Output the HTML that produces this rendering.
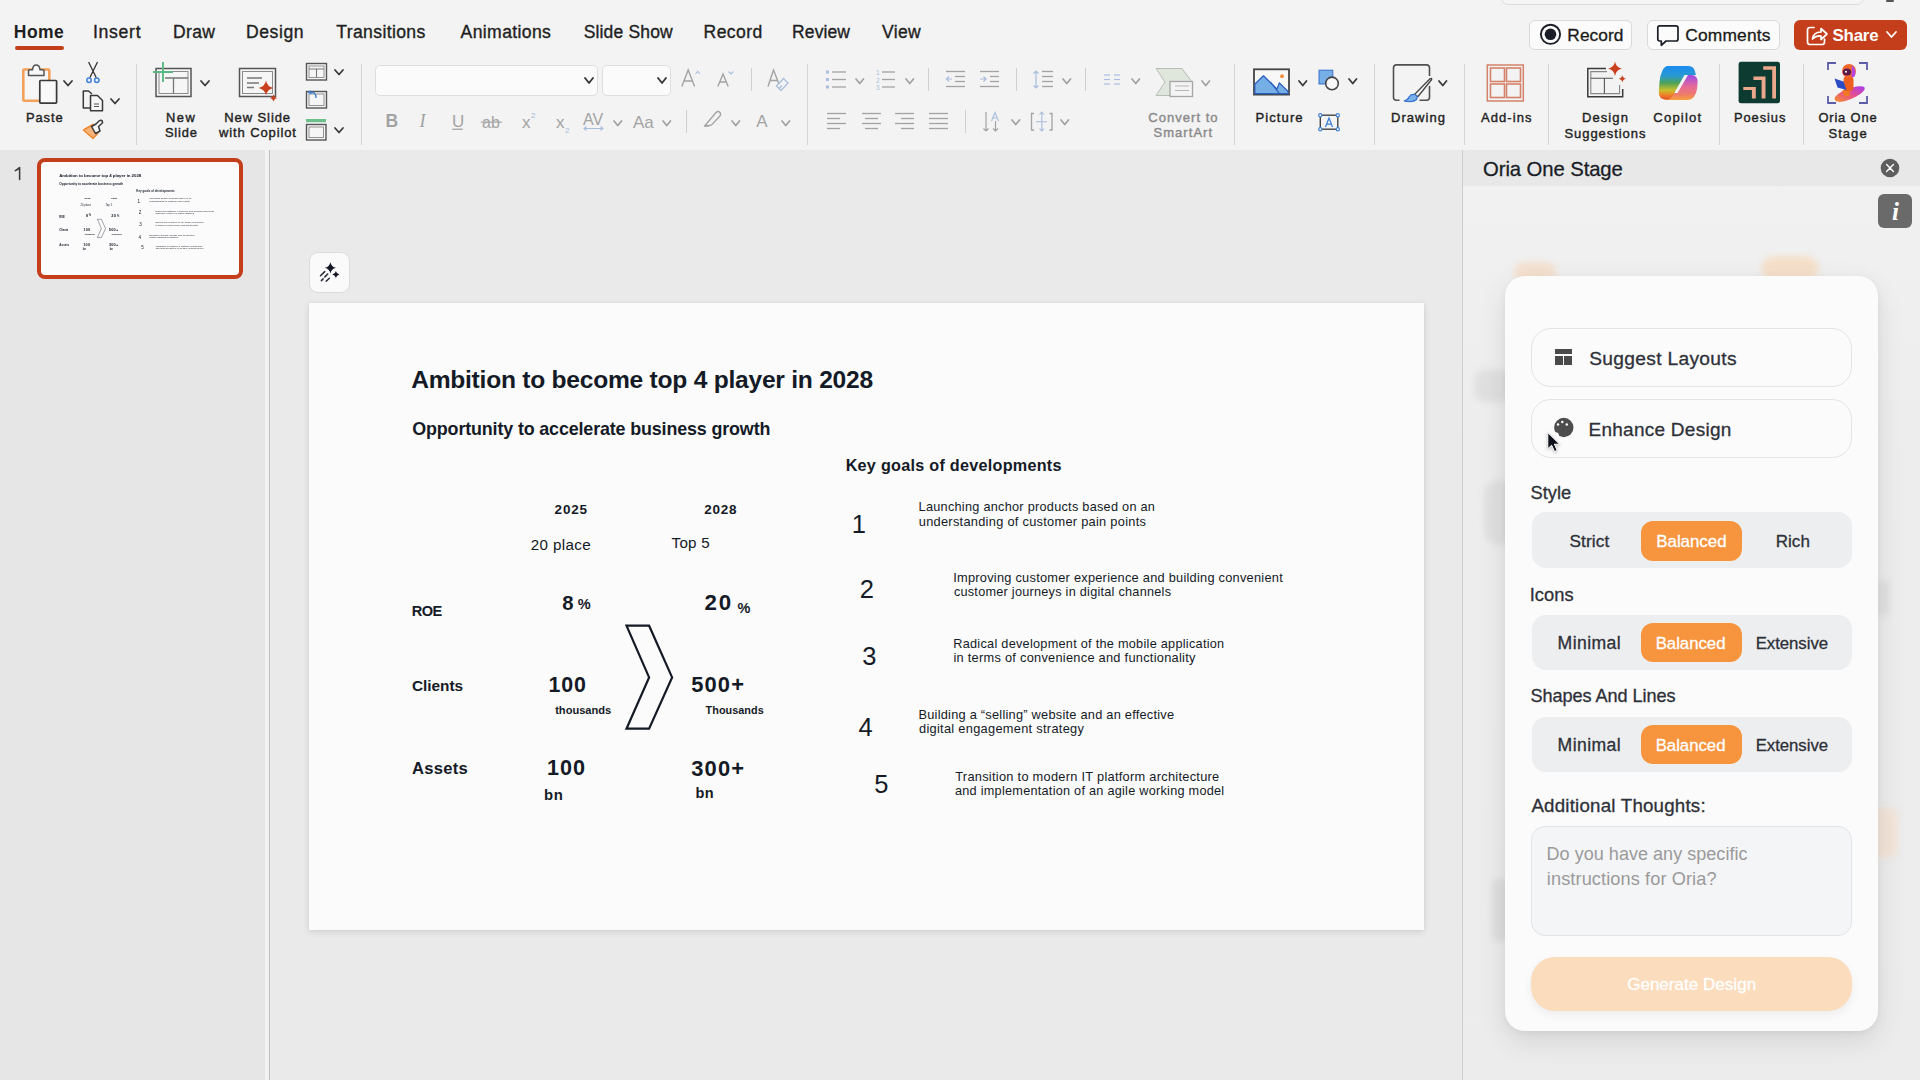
<!DOCTYPE html>
<html><head><meta charset="utf-8"><style>*{margin:0;padding:0;box-sizing:border-box}
html,body{width:1920px;height:1080px;overflow:hidden}
body{position:relative;background:#f3f3f3;font-family:"Liberation Sans",sans-serif}
.a{position:absolute;white-space:nowrap}
svg.a{overflow:visible}
</style></head><body><div class="a" style="left:0px;top:0px;width:1920px;height:149px;background:#f3f3f3"></div><div class="a" style="left:0px;top:149.5px;width:1920px;height:1.5px;background:#d4d4d4"></div><div class="a" style="left:0px;top:150px;width:265px;height:930px;background:#e6e6e6"></div><div class="a" style="left:265px;top:150px;width:4px;height:930px;background:#f2f2f2"></div><div class="a" style="left:269px;top:150px;width:1.2px;height:930px;background:#c2c2c2"></div><div class="a" style="left:270px;top:150px;width:1192px;height:930px;background:#eaeaea"></div><div class="a" style="left:1462px;top:150px;width:1px;height:930px;background:#cdcdcd"></div><div class="a" style="left:1463px;top:150px;width:457px;height:930px;background:#eeeeee"></div><div class="a" style="left:1463px;top:150px;width:457px;height:36px;background:#e8e8e8"></div><div class="a" style="left:1463px;top:186px;width:457px;height:894px;background:linear-gradient(#f1f1f1,#ededed 30%,#ececec)"></div><div class="a" style="left:1474px;top:370px;width:38px;height:32px;background:#e0e0e0;border-radius:10px;filter:blur(3px)"></div><div class="a" style="left:1484px;top:480px;width:31px;height:65px;background:#e0e0e0;border-radius:16px;filter:blur(3px)"></div><div class="a" style="left:1514px;top:262px;width:42px;height:20px;background:#f4e0cf;border-radius:10px;filter:blur(3px)"></div><div class="a" style="left:1762px;top:256px;width:56px;height:26px;background:#f5dfca;border-radius:12px;filter:blur(3px)"></div><div class="a" style="left:1876px;top:580px;width:14px;height:36px;background:#e0e0e0;border-radius:7px;filter:blur(3px)"></div><div class="a" style="left:1874px;top:808px;width:24px;height:50px;background:#f3e4d8;border-radius:8px;filter:blur(3px)"></div><div class="a" style="left:1492px;top:878px;width:16px;height:64px;background:#dedede;border-radius:8px;filter:blur(3px)"></div><div class="a" style="left:1483.09px;top:159px;font-size:20.3px;line-height:20.3px;color:#1a1d26;letter-spacing:-0.089px;-webkit-text-stroke:0.3px #1a1d26">Oria One Stage</div><svg class="a" style="left:1880px;top:158px;" width="20" height="20" viewBox="0 0 20 20"><circle cx="10" cy="10" r="9.3" fill="#5e5e5e"/><path d="M6.6,6.6 L13.4,13.4 M13.4,6.6 L6.6,13.4" stroke="#fff" stroke-width="1.4" stroke-linecap="round"/></svg><div class="a" style="left:1878px;top:194px;width:34px;height:34px;background:#6a6a6a;border-radius:6px"></div><div class="a" style="left:1891.88px;top:199px;font-size:25.0px;line-height:25.0px;color:#ffffff;font-family:'Liberation Serif',serif;font-style:italic;font-weight:bold">i</div><svg class="a" style="left:0px;top:0px;" width="1920" height="1080" viewBox="0 0 1920 1080"><path d="M15.3,170.6 Q17.8,169.4 19.6,167.6 V179.5" fill="none" stroke="#3a3a3a" stroke-width="1.55" stroke-linecap="round" stroke-linejoin="round"/></svg><div class="a" style="left:37px;top:158px;width:205.5px;height:120.5px;border:4.4px solid #c43e1c;border-radius:8px;background:#fbfbfb"></div><div class="a" style="left:40.5px;top:162.4px;width:1115px;height:627px;transform:scale(0.1776);transform-origin:0 0"><div class="a" style="left:102.13px;top:65px;font-size:24.6px;line-height:24.6px;color:#141a26;font-weight:bold;letter-spacing:-0.249px">Ambition to become top 4 player in 2028</div><div class="a" style="left:103.28px;top:118px;font-size:17.9px;line-height:17.9px;color:#141a26;font-weight:bold;letter-spacing:-0.143px">Opportunity to accelerate business growth</div><div class="a" style="left:536.65px;top:154px;font-size:16.2px;line-height:16.2px;color:#141a26;font-weight:bold;letter-spacing:0.262px">Key goals of developments</div><div class="a" style="left:245.53px;top:200px;font-size:13.5px;line-height:13.5px;color:#141a26;font-weight:bold;letter-spacing:0.857px">2025</div><div class="a" style="left:395.23px;top:200px;font-size:13.5px;line-height:13.5px;color:#141a26;font-weight:bold;letter-spacing:0.780px">2028</div><div class="a" style="left:221.84px;top:234px;font-size:15.2px;line-height:15.2px;color:#141a26;letter-spacing:0.341px">20 place</div><div class="a" style="left:362.60px;top:232px;font-size:15.2px;line-height:15.2px;color:#141a26;letter-spacing:0.212px">Top 5</div><div class="a" style="left:102.65px;top:301px;font-size:14.6px;line-height:14.6px;color:#141a26;font-weight:bold;letter-spacing:-0.475px">ROE</div><div class="a" style="left:253.19px;top:290px;font-size:20.3px;line-height:20.3px;color:#141a26;font-weight:bold">8</div><div class="a" style="left:268.64px;top:294px;font-size:14.5px;line-height:14.5px;color:#141a26;font-weight:bold">%</div><div class="a" style="left:395.62px;top:289px;font-size:22.3px;line-height:22.3px;color:#141a26;font-weight:bold;letter-spacing:1.819px">20</div><div class="a" style="left:428.44px;top:298px;font-size:14.5px;line-height:14.5px;color:#141a26;font-weight:bold">%</div><div class="a" style="left:102.88px;top:375px;font-size:15.4px;line-height:15.4px;color:#141a26;font-weight:bold;letter-spacing:-0.021px">Clients</div><div class="a" style="left:239.42px;top:372px;font-size:21.4px;line-height:21.4px;color:#141a26;font-weight:bold;letter-spacing:0.904px">100</div><div class="a" style="left:246.19px;top:402px;font-size:11.1px;line-height:11.1px;color:#141a26;font-weight:bold;letter-spacing:-0.007px">thousands</div><div class="a" style="left:382.14px;top:371px;font-size:21.9px;line-height:21.9px;color:#141a26;font-weight:bold;letter-spacing:1.183px">500+</div><div class="a" style="left:396.59px;top:402px;font-size:10.8px;line-height:10.8px;color:#141a26;font-weight:bold;letter-spacing:0.065px">Thousands</div><div class="a" style="left:103.08px;top:458px;font-size:16.6px;line-height:16.6px;color:#141a26;font-weight:bold;letter-spacing:0.266px">Assets</div><div class="a" style="left:238.00px;top:454px;font-size:21.6px;line-height:21.6px;color:#141a26;font-weight:bold;letter-spacing:1.048px">100</div><div class="a" style="left:235.03px;top:485px;font-size:14.9px;line-height:14.9px;color:#141a26;font-weight:bold;letter-spacing:0.684px">bn</div><div class="a" style="left:382.25px;top:455px;font-size:21.9px;line-height:21.9px;color:#141a26;font-weight:bold;letter-spacing:1.146px">300+</div><div class="a" style="left:386.46px;top:483px;font-size:14.5px;line-height:14.5px;color:#141a26;font-weight:bold;letter-spacing:0.323px">bn</div><svg class="a" style="left:291px;top:307px;" width="90" height="130" viewBox="0 0 90 130"><polygon points="26.5,15.7 49.1,15.7 72.1,67.4 49.1,118.7 26.5,118.7 49.1,67.4" fill="none" stroke="#141a26" stroke-width="2.2" stroke-linejoin="miter"/></svg><div class="a" style="left:542.69px;top:209px;font-size:25.5px;line-height:25.5px;color:#141a26">1</div><div class="a" style="left:550.73px;top:274px;font-size:25.5px;line-height:25.5px;color:#141a26">2</div><div class="a" style="left:553.18px;top:341px;font-size:25.5px;line-height:25.5px;color:#141a26">3</div><div class="a" style="left:549.49px;top:412px;font-size:25.5px;line-height:25.5px;color:#141a26">4</div><div class="a" style="left:565.18px;top:469px;font-size:25.5px;line-height:25.5px;color:#141a26">5</div><div class="a" style="left:609.58px;top:198px;font-size:12.7px;line-height:12.7px;color:#141a26;letter-spacing:0.275px">Launching anchor products based on an</div><div class="a" style="left:609.77px;top:213px;font-size:12.8px;line-height:12.8px;color:#141a26;letter-spacing:0.282px">understanding of customer pain points</div><div class="a" style="left:644.25px;top:269px;font-size:12.8px;line-height:12.8px;color:#141a26;letter-spacing:0.248px">Improving customer experience and building convenient</div><div class="a" style="left:644.89px;top:283px;font-size:12.7px;line-height:12.7px;color:#141a26;letter-spacing:0.252px">customer journeys in digital channels</div><div class="a" style="left:644.28px;top:335px;font-size:12.7px;line-height:12.7px;color:#141a26;letter-spacing:0.274px">Radical development of the mobile application</div><div class="a" style="left:644.47px;top:349px;font-size:12.8px;line-height:12.8px;color:#141a26;letter-spacing:0.268px">in terms of convenience and functionality</div><div class="a" style="left:609.48px;top:406px;font-size:12.8px;line-height:12.8px;color:#141a26;letter-spacing:0.238px">Building a “selling” website and an effective</div><div class="a" style="left:609.99px;top:420px;font-size:12.8px;line-height:12.8px;color:#141a26;letter-spacing:0.295px">digital engagement strategy</div><div class="a" style="left:646.24px;top:468px;font-size:12.8px;line-height:12.8px;color:#141a26;letter-spacing:0.277px">Transition to modern IT platform architecture</div><div class="a" style="left:645.99px;top:482px;font-size:12.7px;line-height:12.7px;color:#141a26;letter-spacing:0.257px">and implementation of an agile working model</div></div><div class="a" style="left:309px;top:252px;width:41px;height:41px;background:#fafafa;border:1px solid #dcdcdc;border-radius:9px"></div><svg class="a" style="left:0px;top:0px;" width="1920" height="1080" viewBox="0 0 1920 1080"><path d="M330.40,262.20 Q331.35,266.85 336.00,267.80 Q331.35,268.75 330.40,273.40 Q329.45,268.75 324.80,267.80 Q329.45,266.85 330.40,262.20 Z M335.90,271.10 Q336.50,274.00 339.40,274.60 Q336.50,275.20 335.90,278.10 Q335.30,275.20 332.40,274.60 Q335.30,274.00 335.90,271.10 Z" fill="#141824"/><path d="M320.5,275.7 L324.7,271.6 M324.8,276.9 L327.7,274 M321.4,280.6 L323.1,278.9 M326.2,281.3 L329.3,278.2" stroke="#2a2d36" stroke-width="1.5" stroke-linecap="round"/></svg><div class="a" style="left:309px;top:303px;width:1115px;height:627px;background:#fbfbfb;box-shadow:0 2px 7px rgba(0,0,0,.11),0 0 2px rgba(0,0,0,.06)"></div><div class="a" style="left:309px;top:303px;width:1115px;height:627px"><div class="a" style="left:102.13px;top:65px;font-size:24.6px;line-height:24.6px;color:#141a26;font-weight:bold;letter-spacing:-0.249px">Ambition to become top 4 player in 2028</div><div class="a" style="left:103.28px;top:118px;font-size:17.9px;line-height:17.9px;color:#141a26;font-weight:bold;letter-spacing:-0.143px">Opportunity to accelerate business growth</div><div class="a" style="left:536.65px;top:154px;font-size:16.2px;line-height:16.2px;color:#141a26;font-weight:bold;letter-spacing:0.262px">Key goals of developments</div><div class="a" style="left:245.53px;top:200px;font-size:13.5px;line-height:13.5px;color:#141a26;font-weight:bold;letter-spacing:0.857px">2025</div><div class="a" style="left:395.23px;top:200px;font-size:13.5px;line-height:13.5px;color:#141a26;font-weight:bold;letter-spacing:0.780px">2028</div><div class="a" style="left:221.84px;top:234px;font-size:15.2px;line-height:15.2px;color:#141a26;letter-spacing:0.341px">20 place</div><div class="a" style="left:362.60px;top:232px;font-size:15.2px;line-height:15.2px;color:#141a26;letter-spacing:0.212px">Top 5</div><div class="a" style="left:102.65px;top:301px;font-size:14.6px;line-height:14.6px;color:#141a26;font-weight:bold;letter-spacing:-0.475px">ROE</div><div class="a" style="left:253.19px;top:290px;font-size:20.3px;line-height:20.3px;color:#141a26;font-weight:bold">8</div><div class="a" style="left:268.64px;top:294px;font-size:14.5px;line-height:14.5px;color:#141a26;font-weight:bold">%</div><div class="a" style="left:395.62px;top:289px;font-size:22.3px;line-height:22.3px;color:#141a26;font-weight:bold;letter-spacing:1.819px">20</div><div class="a" style="left:428.44px;top:298px;font-size:14.5px;line-height:14.5px;color:#141a26;font-weight:bold">%</div><div class="a" style="left:102.88px;top:375px;font-size:15.4px;line-height:15.4px;color:#141a26;font-weight:bold;letter-spacing:-0.021px">Clients</div><div class="a" style="left:239.42px;top:372px;font-size:21.4px;line-height:21.4px;color:#141a26;font-weight:bold;letter-spacing:0.904px">100</div><div class="a" style="left:246.19px;top:402px;font-size:11.1px;line-height:11.1px;color:#141a26;font-weight:bold;letter-spacing:-0.007px">thousands</div><div class="a" style="left:382.14px;top:371px;font-size:21.9px;line-height:21.9px;color:#141a26;font-weight:bold;letter-spacing:1.183px">500+</div><div class="a" style="left:396.59px;top:402px;font-size:10.8px;line-height:10.8px;color:#141a26;font-weight:bold;letter-spacing:0.065px">Thousands</div><div class="a" style="left:103.08px;top:458px;font-size:16.6px;line-height:16.6px;color:#141a26;font-weight:bold;letter-spacing:0.266px">Assets</div><div class="a" style="left:238.00px;top:454px;font-size:21.6px;line-height:21.6px;color:#141a26;font-weight:bold;letter-spacing:1.048px">100</div><div class="a" style="left:235.03px;top:485px;font-size:14.9px;line-height:14.9px;color:#141a26;font-weight:bold;letter-spacing:0.684px">bn</div><div class="a" style="left:382.25px;top:455px;font-size:21.9px;line-height:21.9px;color:#141a26;font-weight:bold;letter-spacing:1.146px">300+</div><div class="a" style="left:386.46px;top:483px;font-size:14.5px;line-height:14.5px;color:#141a26;font-weight:bold;letter-spacing:0.323px">bn</div><svg class="a" style="left:291px;top:307px;" width="90" height="130" viewBox="0 0 90 130"><polygon points="26.5,15.7 49.1,15.7 72.1,67.4 49.1,118.7 26.5,118.7 49.1,67.4" fill="none" stroke="#141a26" stroke-width="2.2" stroke-linejoin="miter"/></svg><div class="a" style="left:542.69px;top:209px;font-size:25.5px;line-height:25.5px;color:#141a26">1</div><div class="a" style="left:550.73px;top:274px;font-size:25.5px;line-height:25.5px;color:#141a26">2</div><div class="a" style="left:553.18px;top:341px;font-size:25.5px;line-height:25.5px;color:#141a26">3</div><div class="a" style="left:549.49px;top:412px;font-size:25.5px;line-height:25.5px;color:#141a26">4</div><div class="a" style="left:565.18px;top:469px;font-size:25.5px;line-height:25.5px;color:#141a26">5</div><div class="a" style="left:609.58px;top:198px;font-size:12.7px;line-height:12.7px;color:#141a26;letter-spacing:0.275px">Launching anchor products based on an</div><div class="a" style="left:609.77px;top:213px;font-size:12.8px;line-height:12.8px;color:#141a26;letter-spacing:0.282px">understanding of customer pain points</div><div class="a" style="left:644.25px;top:269px;font-size:12.8px;line-height:12.8px;color:#141a26;letter-spacing:0.248px">Improving customer experience and building convenient</div><div class="a" style="left:644.89px;top:283px;font-size:12.7px;line-height:12.7px;color:#141a26;letter-spacing:0.252px">customer journeys in digital channels</div><div class="a" style="left:644.28px;top:335px;font-size:12.7px;line-height:12.7px;color:#141a26;letter-spacing:0.274px">Radical development of the mobile application</div><div class="a" style="left:644.47px;top:349px;font-size:12.8px;line-height:12.8px;color:#141a26;letter-spacing:0.268px">in terms of convenience and functionality</div><div class="a" style="left:609.48px;top:406px;font-size:12.8px;line-height:12.8px;color:#141a26;letter-spacing:0.238px">Building a “selling” website and an effective</div><div class="a" style="left:609.99px;top:420px;font-size:12.8px;line-height:12.8px;color:#141a26;letter-spacing:0.295px">digital engagement strategy</div><div class="a" style="left:646.24px;top:468px;font-size:12.8px;line-height:12.8px;color:#141a26;letter-spacing:0.277px">Transition to modern IT platform architecture</div><div class="a" style="left:645.99px;top:482px;font-size:12.7px;line-height:12.7px;color:#141a26;letter-spacing:0.257px">and implementation of an agile working model</div></div><div class="a" style="left:13.86px;top:24px;font-size:17.5px;line-height:17.5px;color:#1f1f1f;font-weight:bold;letter-spacing:0.396px">Home</div><div class="a" style="left:92.91px;top:24px;font-size:17.7px;line-height:17.7px;color:#1f1f1f;letter-spacing:0.686px;-webkit-text-stroke:0.35px #1f1f1f">Insert</div><div class="a" style="left:173.10px;top:24px;font-size:17.5px;line-height:17.5px;color:#1f1f1f;letter-spacing:0.346px;-webkit-text-stroke:0.35px #1f1f1f">Draw</div><div class="a" style="left:245.89px;top:24px;font-size:17.6px;line-height:17.6px;color:#1f1f1f;letter-spacing:0.603px;-webkit-text-stroke:0.35px #1f1f1f">Design</div><div class="a" style="left:336.25px;top:24px;font-size:17.6px;line-height:17.6px;color:#1f1f1f;letter-spacing:0.362px;-webkit-text-stroke:0.35px #1f1f1f">Transitions</div><div class="a" style="left:460.60px;top:24px;font-size:17.6px;line-height:17.6px;color:#1f1f1f;letter-spacing:0.365px;-webkit-text-stroke:0.35px #1f1f1f">Animations</div><div class="a" style="left:583.71px;top:24px;font-size:17.5px;line-height:17.5px;color:#1f1f1f;letter-spacing:0.156px;-webkit-text-stroke:0.35px #1f1f1f">Slide Show</div><div class="a" style="left:703.49px;top:24px;font-size:17.6px;line-height:17.6px;color:#1f1f1f;letter-spacing:0.438px;-webkit-text-stroke:0.35px #1f1f1f">Record</div><div class="a" style="left:792.10px;top:24px;font-size:17.5px;line-height:17.5px;color:#1f1f1f;letter-spacing:0.100px;-webkit-text-stroke:0.35px #1f1f1f">Review</div><div class="a" style="left:882.01px;top:24px;font-size:17.5px;line-height:17.5px;color:#1f1f1f;letter-spacing:0.354px;-webkit-text-stroke:0.35px #1f1f1f">View</div><div class="a" style="left:15px;top:46px;width:49px;height:4px;background:#c43e1c;border-radius:2px"></div><div class="a" style="left:1501px;top:-26px;width:363px;height:30.5px;background:#f5f5f5;border:1px solid #dddddd;border-radius:7px"></div><div class="a" style="left:1886px;top:0px;width:8px;height:1.5px;background:#555;border-radius:1px"></div><div class="a" style="left:1529px;top:20px;width:102.5px;height:29.5px;background:#fbfbfb;border:1px solid #d9d9d9;border-radius:6px"></div><svg class="a" style="left:1539px;top:23px;" width="23" height="23" viewBox="0 0 23 23"><circle cx="11.5" cy="11.3" r="9.6" fill="none" stroke="#1a1d26" stroke-width="1.9"/><circle cx="11.5" cy="11.3" r="5.8" fill="#1a1d26"/></svg><div class="a" style="left:1567.37px;top:27px;font-size:17.3px;line-height:17.3px;color:#1a1a1a;letter-spacing:0.073px;-webkit-text-stroke:0.3px #1a1a1a">Record</div><div class="a" style="left:1646.5px;top:20px;width:133.0px;height:29.5px;background:#fbfbfb;border:1px solid #d9d9d9;border-radius:6px"></div><svg class="a" style="left:1656px;top:24px;" width="24" height="23" viewBox="0 0 24 23"><path d="M3.5,1.8 H20 Q22,1.8 22,3.8 V15 Q22,17 20,17 H10 L5.3,21.3 V17 H3.5 Q1.8,17 1.8,15 V3.8 Q1.8,1.8 3.5,1.8 Z" fill="none" stroke="#1a1d26" stroke-width="1.7" stroke-linejoin="round"/></svg><div class="a" style="left:1685.13px;top:27px;font-size:17.4px;line-height:17.4px;color:#1a1a1a;letter-spacing:0.193px;-webkit-text-stroke:0.3px #1a1a1a">Comments</div><div class="a" style="left:1794px;top:19.5px;width:113px;height:30.5px;background:#c43e1c;border-radius:6px"></div><svg class="a" style="left:1805px;top:23px;" width="24" height="24" viewBox="0 0 24 24"><path d="M9,4.5 H5 Q2.5,4.5 2.5,7 V19 Q2.5,21.5 5,21.5 H17 Q19.5,21.5 19.5,19 V16" fill="none" stroke="#fff" stroke-width="1.7" stroke-linecap="round"/><path d="M7.5,16 Q8.5,9 16,9 V5.5 L22,11 L16,16.5 V13 Q11,12.5 7.5,16 Z" fill="none" stroke="#fff" stroke-width="1.7" stroke-linejoin="round"/></svg><div class="a" style="left:1832.49px;top:28px;font-size:16.9px;line-height:16.9px;color:#ffffff;font-weight:bold;letter-spacing:-0.221px">Share</div><svg class="a" style="left:1886px;top:31px;" width="11" height="7" viewBox="0 0 11 7"><path d="M1,1 L5.5,6 L10,1" fill="none" stroke="#fff" stroke-width="1.7920000000000003" stroke-linecap="round" stroke-linejoin="round"/></svg><div class="a" style="left:136px;top:64px;width:1px;height:81px;background:#d4d4d4"></div><div class="a" style="left:361px;top:64px;width:1px;height:81px;background:#d4d4d4"></div><div class="a" style="left:807px;top:64px;width:1px;height:81px;background:#d4d4d4"></div><div class="a" style="left:1234px;top:64px;width:1px;height:81px;background:#d4d4d4"></div><div class="a" style="left:1374px;top:64px;width:1px;height:81px;background:#d4d4d4"></div><div class="a" style="left:1464px;top:64px;width:1px;height:81px;background:#d4d4d4"></div><div class="a" style="left:1548px;top:64px;width:1px;height:81px;background:#d4d4d4"></div><div class="a" style="left:1719px;top:64px;width:1px;height:81px;background:#d4d4d4"></div><div class="a" style="left:1803px;top:64px;width:1px;height:81px;background:#d4d4d4"></div><div class="a" style="left:751px;top:68px;width:1px;height:23px;background:#d0d0d0"></div><div class="a" style="left:928px;top:68px;width:1px;height:23px;background:#d0d0d0"></div><div class="a" style="left:1016px;top:68px;width:1px;height:23px;background:#d0d0d0"></div><div class="a" style="left:1085px;top:68px;width:1px;height:23px;background:#d0d0d0"></div><div class="a" style="left:686px;top:110px;width:1px;height:23px;background:#d0d0d0"></div><div class="a" style="left:965px;top:110px;width:1px;height:23px;background:#d0d0d0"></div><div class="a" style="left:25.97px;top:112px;font-size:12.9px;line-height:12.9px;color:#1f1f1f;letter-spacing:0.913px;-webkit-text-stroke:0.4px #1f1f1f">Paste</div><div class="a" style="left:165.97px;top:112px;font-size:12.9px;line-height:12.9px;color:#1f1f1f;letter-spacing:1.584px;-webkit-text-stroke:0.4px #1f1f1f">New</div><div class="a" style="left:164.92px;top:127px;font-size:12.9px;line-height:12.9px;color:#1f1f1f;letter-spacing:0.865px;-webkit-text-stroke:0.4px #1f1f1f">Slide</div><div class="a" style="left:224.26px;top:111px;font-size:13.0px;line-height:13.0px;color:#1f1f1f;letter-spacing:0.916px;-webkit-text-stroke:0.4px #1f1f1f">New Slide</div><div class="a" style="left:219.00px;top:126px;font-size:13.0px;line-height:13.0px;color:#1f1f1f;letter-spacing:0.884px;-webkit-text-stroke:0.4px #1f1f1f">with Copilot</div><div class="a" style="left:1148.35px;top:111px;font-size:13.1px;line-height:13.1px;color:#8a8a8a;letter-spacing:0.976px;-webkit-text-stroke:0.4px #8a8a8a">Convert to</div><div class="a" style="left:1153.41px;top:126px;font-size:13.0px;line-height:13.0px;color:#8a8a8a;letter-spacing:1.061px;-webkit-text-stroke:0.4px #8a8a8a">SmartArt</div><div class="a" style="left:1255.45px;top:111px;font-size:13.1px;line-height:13.1px;color:#1f1f1f;letter-spacing:1.066px;-webkit-text-stroke:0.4px #1f1f1f">Picture</div><div class="a" style="left:1390.96px;top:111px;font-size:13.0px;line-height:13.0px;color:#1f1f1f;letter-spacing:1.040px;-webkit-text-stroke:0.4px #1f1f1f">Drawing</div><div class="a" style="left:1481.00px;top:111px;font-size:13.0px;line-height:13.0px;color:#1f1f1f;letter-spacing:1.064px;-webkit-text-stroke:0.4px #1f1f1f">Add-ins</div><div class="a" style="left:1581.96px;top:111px;font-size:13.0px;line-height:13.0px;color:#1f1f1f;letter-spacing:1.091px;-webkit-text-stroke:0.4px #1f1f1f">Design</div><div class="a" style="left:1564.41px;top:127px;font-size:13.0px;line-height:13.0px;color:#1f1f1f;letter-spacing:0.948px;-webkit-text-stroke:0.4px #1f1f1f">Suggestions</div><div class="a" style="left:1653.35px;top:111px;font-size:13.1px;line-height:13.1px;color:#1f1f1f;letter-spacing:1.163px;-webkit-text-stroke:0.4px #1f1f1f">Copilot</div><div class="a" style="left:1733.97px;top:112px;font-size:12.9px;line-height:12.9px;color:#1f1f1f;letter-spacing:0.927px;-webkit-text-stroke:0.4px #1f1f1f">Poesius</div><div class="a" style="left:1818.42px;top:112px;font-size:12.9px;line-height:12.9px;color:#1f1f1f;letter-spacing:0.836px;-webkit-text-stroke:0.4px #1f1f1f">Oria One</div><div class="a" style="left:1828.41px;top:127px;font-size:13.0px;line-height:13.0px;color:#1f1f1f;letter-spacing:1.060px;-webkit-text-stroke:0.4px #1f1f1f">Stage</div><div class="a" style="left:374.5px;top:65px;width:223.5px;height:30.5px;background:#fbfbfb;border:1px solid #dedede;border-radius:5px"></div><svg class="a" style="left:584px;top:77px;" width="10" height="7" viewBox="0 0 10 7"><path d="M1,1 L5.0,6 L9,1" fill="none" stroke="#3a3a3a" stroke-width="1.9040000000000001" stroke-linecap="round" stroke-linejoin="round"/></svg><div class="a" style="left:602px;top:65px;width:69px;height:30.5px;background:#fbfbfb;border:1px solid #dedede;border-radius:5px"></div><svg class="a" style="left:657px;top:77px;" width="10" height="7" viewBox="0 0 10 7"><path d="M1,1 L5.0,6 L9,1" fill="none" stroke="#3a3a3a" stroke-width="1.9040000000000001" stroke-linecap="round" stroke-linejoin="round"/></svg><svg class="a" style="left:0px;top:0px;" width="1920" height="150" viewBox="0 0 1920 150"><rect x="23.3" y="69.5" width="26" height="31.3" rx="1" fill="#f6f6f6" stroke="#f2a05a" stroke-width="2.6"/><path d="M28.5,75.5 V71 Q28.5,69.8 30,69.8 H32.5 Q33,65 36.2,65 Q39.4,65 40,69.8 H42.5 Q44,69.8 44,71 V75.5 Z" fill="#f8f8f8" stroke="#555" stroke-width="1.5" stroke-linejoin="round"/><rect x="39.8" y="80.5" width="16.8" height="22.6" rx="0.8" fill="#f9f9f9" stroke="#3a3a3a" stroke-width="1.7"/><path d="M88.6,62 L96.3,77.8 M97.5,62 L89.8,77.8" stroke="#333" stroke-width="1.3" fill="none"/><circle cx="89" cy="80.2" r="2.2" fill="none" stroke="#3f82d6" stroke-width="1.5"/><circle cx="96.8" cy="80.2" r="2.2" fill="none" stroke="#3f82d6" stroke-width="1.5"/><path d="M90,108 H83.3 V91 H88.5 L92,94" fill="none" stroke="#3a3a3a" stroke-width="1.5" stroke-linejoin="round"/><path d="M90.5,95.5 H97.5 L102.5,100.5 V110.8 H90.5 Z" fill="#f7f7f7" stroke="#3a3a3a" stroke-width="1.5" stroke-linejoin="round"/><path d="M94,104 H99 M94,106.5 H99" stroke="#555" stroke-width="1"/><path d="M83.5,130 L93,124.5 L98,133 L93,138.5 Z" fill="#f7b27a" stroke="#f08a32" stroke-width="1.6" stroke-linejoin="round"/><path d="M91.5,126.5 L96,124 L99,121 Q101,119.5 102.3,121 Q103.2,122.5 101.3,124 L98.5,126.5 L100,131 L95.5,133.5 Z" fill="#f6f6f6" stroke="#3a3a3a" stroke-width="1.5" stroke-linejoin="round"/><rect x="156" y="68.5" width="35" height="28" fill="#f6f6f6" stroke="#555" stroke-width="1.5"/><rect x="159" y="71.5" width="29" height="22" fill="none" stroke="#8a8a8a" stroke-width="1"/><path d="M165,78 H188 M173.5,78 V93.5" stroke="#777" stroke-width="1.3"/><path d="M163,62 V82 M153,72 H173" stroke="#5cb882" stroke-width="1.9"/><rect x="239.5" y="68.5" width="36" height="28" fill="#f6f6f6" stroke="#555" stroke-width="1.5"/><rect x="242.5" y="71.5" width="30" height="22" fill="none" stroke="#8a8a8a" stroke-width="1"/><path d="M247,78 H262 M247,83 H259 M247,87.5 H254" stroke="#777" stroke-width="1.3"/><path d="M266,80.5 Q267.2,86.8 273.5,88 Q267.2,89.2 266,95.5 Q264.8,89.2 258.5,88 Q264.8,86.8 266,80.5 Z" fill="#c8401e"/><path d="M273.5,94.5 Q274.1,97.4 277,98 Q274.1,98.6 273.5,101.5 Q272.9,98.6 270,98 Q272.9,97.4 273.5,94.5 Z" fill="#c8401e"/><rect x="306.5" y="63.5" width="20" height="16.5" fill="#f6f6f6" stroke="#555" stroke-width="1.4"/><rect x="309" y="66" width="15" height="11.5" fill="none" stroke="#888" stroke-width="0.9"/><path d="M309,69 H324 M316.5,69 V77.5" stroke="#777" stroke-width="1.1"/><rect x="306.5" y="91.5" width="20" height="16.5" fill="#f6f6f6" stroke="#555" stroke-width="1.4"/><rect x="309" y="94" width="15" height="11.5" fill="none" stroke="#888" stroke-width="0.9"/><path d="M310,93 Q316,91 316,98" fill="none" stroke="#3f82d6" stroke-width="1.5"/><path d="M307.5,92.5 L310.5,90 L311,94.5 Z" fill="#3f82d6"/><rect x="306" y="119" width="20" height="3.2" fill="#6cc08a"/><rect x="306.5" y="124.5" width="19.5" height="15.5" fill="#f6f6f6" stroke="#555" stroke-width="1.4"/><rect x="309" y="127" width="14.5" height="10.5" fill="none" stroke="#888" stroke-width="0.9"/></svg><svg class="a" style="left:63px;top:80px;" width="10" height="6.5" viewBox="0 0 10 6.5"><path d="M1,1 L5.0,5.5 L9,1" fill="none" stroke="#3a3a3a" stroke-width="1.7920000000000003" stroke-linecap="round" stroke-linejoin="round"/></svg><svg class="a" style="left:110px;top:98px;" width="10" height="6.5" viewBox="0 0 10 6.5"><path d="M1,1 L5.0,5.5 L9,1" fill="none" stroke="#3a3a3a" stroke-width="1.7920000000000003" stroke-linecap="round" stroke-linejoin="round"/></svg><svg class="a" style="left:200px;top:80px;" width="10" height="6.5" viewBox="0 0 10 6.5"><path d="M1,1 L5.0,5.5 L9,1" fill="none" stroke="#3a3a3a" stroke-width="1.7920000000000003" stroke-linecap="round" stroke-linejoin="round"/></svg><svg class="a" style="left:334px;top:69px;" width="10" height="6.5" viewBox="0 0 10 6.5"><path d="M1,1 L5.0,5.5 L9,1" fill="none" stroke="#3a3a3a" stroke-width="1.7920000000000003" stroke-linecap="round" stroke-linejoin="round"/></svg><svg class="a" style="left:334px;top:127px;" width="10" height="6.5" viewBox="0 0 10 6.5"><path d="M1,1 L5.0,5.5 L9,1" fill="none" stroke="#3a3a3a" stroke-width="1.7920000000000003" stroke-linecap="round" stroke-linejoin="round"/></svg><svg class="a" style="left:0px;top:0px;" width="1920" height="150" viewBox="0 0 1920 150"><path d="M681.8,86.5 L688.2,70 L694.6,86.5 M684,81 H692.4" fill="none" stroke="#a3a3a3" stroke-width="1.4"/><path d="M695.5,74 L697.8,71.3 L700,74" fill="none" stroke="#a9bddc" stroke-width="1.1"/><path d="M717.8,86.5 L723,74 L728.2,86.5 M719.6,82 H726.4" fill="none" stroke="#a3a3a3" stroke-width="1.4"/><path d="M728.5,71.5 L731,74 L733.5,71.5" fill="none" stroke="#a9bddc" stroke-width="1.1"/><path d="M768,86.5 L773.5,70 L779,84 M770,80.5 H777" fill="none" stroke="#a3a3a3" stroke-width="1.4"/><path d="M776.5,86 L783.5,78.5 L788,83 L781,90.5 Z M779,88.5 L782,85.5" fill="none" stroke="#a9bddc" stroke-width="1.3"/><text x="385.5" y="127.3" font-family="Liberation Sans" font-weight="bold" font-size="17.5" fill="#a3a3a3">B</text><text x="419.5" y="127.3" font-family="Liberation Serif" font-style="italic" font-size="18" fill="#a3a3a3">I</text><text x="452" y="127" font-family="Liberation Sans" font-size="17" fill="#a3a3a3">U</text><rect x="452.3" y="128.6" width="10.5" height="1.3" fill="#a3a3a3"/><text x="482" y="127.5" font-family="Liberation Sans" font-size="16" fill="#a3a3a3">ab</text><rect x="480.8" y="121.5" width="21" height="1.2" fill="#a3a3a3"/><text x="522" y="127.5" font-family="Liberation Sans" font-size="17" fill="#a3a3a3">x</text><text x="531" y="117.5" font-family="Liberation Sans" font-size="8" fill="#a9bddc">2</text><text x="556" y="127.5" font-family="Liberation Sans" font-size="17" fill="#a3a3a3">x</text><text x="565" y="132.5" font-family="Liberation Sans" font-size="8" fill="#a9bddc">2</text><text x="583" y="125" font-family="Liberation Sans" font-size="16" fill="#a3a3a3">AV</text><path d="M584,128.5 H603 M586.5,126.5 L584,128.5 L586.5,130.5 M600.5,126.5 L603,128.5 L600.5,130.5" fill="none" stroke="#a9bddc" stroke-width="1.1"/><text x="633" y="128" font-family="Liberation Sans" font-size="17" fill="#a3a3a3">Aa</text><path d="M705,125.5 L708,122 L716,112.5 Q718,110.5 720,112.5 Q721.5,114.5 719.5,116.5 L711.5,125 L707.5,126 Z" fill="none" stroke="#a3a3a3" stroke-width="1.3"/><path d="M703.5,127 L707,124.5 L709,126.5 Z" fill="#a3a3a3"/><text x="756.3" y="126.5" font-family="Liberation Sans" font-size="17" fill="#a3a3a3">A</text></svg><svg class="a" style="left:612.5px;top:119.5px;" width="9.5" height="6.5" viewBox="0 0 9.5 6.5"><path d="M1,1 L4.75,5.5 L8.5,1" fill="none" stroke="#a0a0a0" stroke-width="1.6800000000000002" stroke-linecap="round" stroke-linejoin="round"/></svg><svg class="a" style="left:662px;top:119.5px;" width="9.5" height="6.5" viewBox="0 0 9.5 6.5"><path d="M1,1 L4.75,5.5 L8.5,1" fill="none" stroke="#a0a0a0" stroke-width="1.6800000000000002" stroke-linecap="round" stroke-linejoin="round"/></svg><svg class="a" style="left:731px;top:120px;" width="9.5" height="6.5" viewBox="0 0 9.5 6.5"><path d="M1,1 L4.75,5.5 L8.5,1" fill="none" stroke="#a0a0a0" stroke-width="1.6800000000000002" stroke-linecap="round" stroke-linejoin="round"/></svg><svg class="a" style="left:781px;top:120px;" width="9.5" height="6.5" viewBox="0 0 9.5 6.5"><path d="M1,1 L4.75,5.5 L8.5,1" fill="none" stroke="#a0a0a0" stroke-width="1.6800000000000002" stroke-linecap="round" stroke-linejoin="round"/></svg><svg class="a" style="left:0px;top:0px;" width="1920" height="150" viewBox="0 0 1920 150"><rect x="826" y="70.5" width="3" height="3" fill="#a9bddc"/><rect x="826" y="78" width="3" height="3" fill="#a9bddc"/><rect x="826" y="85.5" width="3" height="3" fill="#a9bddc"/><path d="M832,72 H846" stroke="#a3a3a3" stroke-width="1.3"/><path d="M832,79.5 H846" stroke="#a3a3a3" stroke-width="1.3"/><path d="M832,87 H846" stroke="#a3a3a3" stroke-width="1.3"/><text x="876" y="75" font-family="Liberation Sans" font-size="6.5" fill="#a9bddc">1</text><text x="876" y="82.5" font-family="Liberation Sans" font-size="6.5" fill="#a9bddc">2</text><text x="876" y="90" font-family="Liberation Sans" font-size="6.5" fill="#a9bddc">3</text><path d="M882,72 H895" stroke="#a3a3a3" stroke-width="1.3"/><path d="M882,79.5 H895" stroke="#a3a3a3" stroke-width="1.3"/><path d="M882,87 H895" stroke="#a3a3a3" stroke-width="1.3"/><path d="M946,71.5 H965" stroke="#a3a3a3" stroke-width="1.3"/><path d="M955,76.5 H965" stroke="#a3a3a3" stroke-width="1.3"/><path d="M955,81.5 H965" stroke="#a3a3a3" stroke-width="1.3"/><path d="M946,86.5 H965" stroke="#a3a3a3" stroke-width="1.3"/><path d="M952,79 H946.5 M949,76.5 L946.5,79 L949,81.5" fill="none" stroke="#a9bddc" stroke-width="1.2"/><path d="M980,71.5 H999" stroke="#a3a3a3" stroke-width="1.3"/><path d="M990,76.5 H999" stroke="#a3a3a3" stroke-width="1.3"/><path d="M990,81.5 H999" stroke="#a3a3a3" stroke-width="1.3"/><path d="M980,86.5 H999" stroke="#a3a3a3" stroke-width="1.3"/><path d="M980,79 H986 M983.5,76.5 L986,79 L983.5,81.5" fill="none" stroke="#a9bddc" stroke-width="1.2"/><path d="M1042,71.5 H1053" stroke="#a3a3a3" stroke-width="1.3"/><path d="M1042,76.5 H1053" stroke="#a3a3a3" stroke-width="1.3"/><path d="M1042,81.5 H1053" stroke="#a3a3a3" stroke-width="1.3"/><path d="M1042,86.5 H1053" stroke="#a3a3a3" stroke-width="1.3"/><path d="M1036,71 V88 M1033.5,73.5 L1036,71 L1038.5,73.5 M1033.5,85.5 L1036,88 L1038.5,85.5" fill="none" stroke="#a9bddc" stroke-width="1.2"/><path d="M1104,75 H1110" stroke="#a9bddc" stroke-width="1.2"/><path d="M1114,75 H1120" stroke="#a9bddc" stroke-width="1.2"/><path d="M1104,79.5 H1110" stroke="#a9bddc" stroke-width="1.2"/><path d="M1114,79.5 H1120" stroke="#a9bddc" stroke-width="1.2"/><path d="M1104,84 H1110" stroke="#a9bddc" stroke-width="1.2"/><path d="M1114,84 H1120" stroke="#a9bddc" stroke-width="1.2"/><path d="M827,113.5 H846" stroke="#a3a3a3" stroke-width="1.3"/><path d="M827,118.5 H840" stroke="#a3a3a3" stroke-width="1.3"/><path d="M827,123.5 H846" stroke="#a3a3a3" stroke-width="1.3"/><path d="M827,128.5 H840" stroke="#a3a3a3" stroke-width="1.3"/><path d="M862,113.5 H881" stroke="#a3a3a3" stroke-width="1.3"/><path d="M865,118.5 H878" stroke="#a3a3a3" stroke-width="1.3"/><path d="M862,123.5 H881" stroke="#a3a3a3" stroke-width="1.3"/><path d="M865,128.5 H878" stroke="#a3a3a3" stroke-width="1.3"/><path d="M895,113.5 H914" stroke="#a3a3a3" stroke-width="1.3"/><path d="M901,118.5 H914" stroke="#a3a3a3" stroke-width="1.3"/><path d="M895,123.5 H914" stroke="#a3a3a3" stroke-width="1.3"/><path d="M901,128.5 H914" stroke="#a3a3a3" stroke-width="1.3"/><path d="M929,113.5 H948" stroke="#a3a3a3" stroke-width="1.3"/><path d="M929,118.5 H948" stroke="#a3a3a3" stroke-width="1.3"/><path d="M929,123.5 H948" stroke="#a3a3a3" stroke-width="1.3"/><path d="M929,128.5 H948" stroke="#a3a3a3" stroke-width="1.3"/><path d="M986,112 V131 M983.5,128.5 L986,131 L988.5,128.5 M995.5,121 V131 M993,128.5 L995.5,131 L998,128.5" fill="none" stroke="#a3a3a3" stroke-width="1.2"/><path d="M991.5,121 L995,112.5 L998.5,121 M992.8,118 H997.2" fill="none" stroke="#a9bddc" stroke-width="1.1"/><path d="M1034,113.5 H1031.5 V130 H1034 M1049.5,113.5 H1052 V130 H1049.5" fill="none" stroke="#a3a3a3" stroke-width="1.3"/><path d="M1041.8,112 V131 M1039.5,114.5 L1041.8,112 L1044,114.5 M1039.5,128.5 L1041.8,131 L1044,128.5 M1036,121.8 H1047" fill="none" stroke="#a9bddc" stroke-width="1.1"/><path d="M1156,68.5 H1182 L1192,82 L1182,95.5 H1156 L1165,82 Z" fill="#dfe6dc" stroke="#b8bdb5" stroke-width="1"/><rect x="1170" y="81.5" width="22.5" height="15" fill="#f4f4f4" stroke="#a5a5a5" stroke-width="1.3"/><path d="M1175,86 H1189 M1175,90.5 H1189" stroke="#b5b5b5" stroke-width="1"/></svg><svg class="a" style="left:855px;top:77.5px;" width="9.5" height="6.5" viewBox="0 0 9.5 6.5"><path d="M1,1 L4.75,5.5 L8.5,1" fill="none" stroke="#a0a0a0" stroke-width="1.6800000000000002" stroke-linecap="round" stroke-linejoin="round"/></svg><svg class="a" style="left:905px;top:77.5px;" width="9.5" height="6.5" viewBox="0 0 9.5 6.5"><path d="M1,1 L4.75,5.5 L8.5,1" fill="none" stroke="#a0a0a0" stroke-width="1.6800000000000002" stroke-linecap="round" stroke-linejoin="round"/></svg><svg class="a" style="left:1062px;top:77.5px;" width="9.5" height="6.5" viewBox="0 0 9.5 6.5"><path d="M1,1 L4.75,5.5 L8.5,1" fill="none" stroke="#a0a0a0" stroke-width="1.6800000000000002" stroke-linecap="round" stroke-linejoin="round"/></svg><svg class="a" style="left:1131px;top:77.5px;" width="9.5" height="6.5" viewBox="0 0 9.5 6.5"><path d="M1,1 L4.75,5.5 L8.5,1" fill="none" stroke="#a0a0a0" stroke-width="1.6800000000000002" stroke-linecap="round" stroke-linejoin="round"/></svg><svg class="a" style="left:1201px;top:79.5px;" width="9.5" height="6.5" viewBox="0 0 9.5 6.5"><path d="M1,1 L4.75,5.5 L8.5,1" fill="none" stroke="#a0a0a0" stroke-width="1.6800000000000002" stroke-linecap="round" stroke-linejoin="round"/></svg><svg class="a" style="left:1011px;top:118.5px;" width="9.5" height="6.5" viewBox="0 0 9.5 6.5"><path d="M1,1 L4.75,5.5 L8.5,1" fill="none" stroke="#a0a0a0" stroke-width="1.6800000000000002" stroke-linecap="round" stroke-linejoin="round"/></svg><svg class="a" style="left:1060px;top:118.5px;" width="9.5" height="6.5" viewBox="0 0 9.5 6.5"><path d="M1,1 L4.75,5.5 L8.5,1" fill="none" stroke="#a0a0a0" stroke-width="1.6800000000000002" stroke-linecap="round" stroke-linejoin="round"/></svg><svg class="a" style="left:0px;top:0px;" width="1920" height="150" viewBox="0 0 1920 150"><rect x="1254" y="69.3" width="35" height="25.3" fill="#f8f8f8" stroke="#444" stroke-width="1.8"/><path d="M1254.9,84 L1263.5,75.8 L1277,89 L1279.4,82.8 L1288.1,91.5 V93.7 H1254.9 Z" fill="#76aee6" stroke="#2a5fbd" stroke-width="1.2" stroke-linejoin="round"/><path d="M1270.5,82 L1279.4,93.7" stroke="#2a5fbd" stroke-width="1.2"/><circle cx="1282" cy="76.2" r="1.9" fill="#f28c38"/><rect x="1319" y="70.2" width="13.8" height="13.8" fill="#76aee6" stroke="#3a6fcc" stroke-width="1"/><circle cx="1332" cy="83.4" r="6.3" fill="#f8f8f8" stroke="#444" stroke-width="1.6"/><rect x="1320.3" y="115.2" width="17.5" height="14" fill="none" stroke="#444" stroke-width="1.4"/><circle cx="1320.3" cy="115.2" r="1.6" fill="#fff" stroke="#3f82d6" stroke-width="1.2"/><circle cx="1337.8" cy="115.2" r="1.6" fill="#fff" stroke="#3f82d6" stroke-width="1.2"/><circle cx="1320.3" cy="129.2" r="1.6" fill="#fff" stroke="#3f82d6" stroke-width="1.2"/><circle cx="1337.8" cy="129.2" r="1.6" fill="#fff" stroke="#3f82d6" stroke-width="1.2"/><path d="M1325.5,127 L1329,118 L1332.5,127 M1326.6,124.2 H1331.4" fill="none" stroke="#3f82d6" stroke-width="1.3"/><path d="M1399.5,100.3 H1396.5 Q1393.5,100.3 1393.5,97.3 V67.9 Q1393.5,64.9 1396.5,64.9 H1426.5 Q1429.5,64.9 1429.5,67.9 V76" fill="none" stroke="#505050" stroke-width="1.6"/><path d="M1429.5,86 V97.3 Q1429.5,100.3 1426.5,100.3 H1419.5" fill="none" stroke="#505050" stroke-width="1.6"/><path d="M1414.5,94.5 L1430,78.8 Q1432,77.5 1431.7,79.5 L1418,96.5 Z" fill="#f8f8f8" stroke="#444" stroke-width="1.3" stroke-linejoin="round"/><path d="M1404,101 Q1408,100 1409,97 Q1411,93.5 1414.5,94.5 Q1418.5,96 1416.5,99.5 Q1413,103 1404,101 Z" fill="#7ab0ea" stroke="#2f6fd0" stroke-width="1.2"/><rect x="1487.3" y="65" width="36" height="36" fill="none" stroke="#d4826a" stroke-width="1.5"/><rect x="1490.5" y="68" width="14" height="13.5" fill="none" stroke="#d4826a" stroke-width="1.6"/><rect x="1506.5" y="68" width="14" height="13.5" fill="none" stroke="#d4826a" stroke-width="1.6"/><rect x="1490.5" y="84" width="14" height="13.5" fill="none" stroke="#d4826a" stroke-width="1.6"/><rect x="1506.5" y="84" width="14" height="13.5" fill="none" stroke="#d4826a" stroke-width="1.6"/><path d="M1606,68.4 H1587.8 V96.7 H1622.7 V89" fill="none" stroke="#3a3a3a" stroke-width="1.5"/><path d="M1607,71.6 H1590.8 V93.6 H1619.6 V85" fill="none" stroke="#888" stroke-width="1.1"/><path d="M1590.8,78.2 H1613 M1604.4,78.2 V93.6" stroke="#555" stroke-width="1.1"/><path d="M1615,61.5 Q1616,67.7 1622,68.7 Q1616,69.7 1615,76 Q1614,69.7 1608,68.7 Q1614,67.7 1615,61.5 Z" fill="#c8401e"/><path d="M1622.3,75 Q1622.8,78.3 1626,78.8 Q1622.8,79.3 1622.3,82.6 Q1621.8,79.3 1618.6,78.8 Q1621.8,78.3 1622.3,75 Z" fill="#c8401e"/><defs><linearGradient id="cpl" x1="0" y1="0" x2="0" y2="1"><stop offset="0" stop-color="#1a8cf0"/><stop offset="0.3" stop-color="#2a9ad0"/><stop offset="0.5" stop-color="#4ca15a"/><stop offset="0.72" stop-color="#c8c02c"/><stop offset="0.88" stop-color="#f07a2a"/><stop offset="1" stop-color="#e0502a"/></linearGradient><linearGradient id="cpr" x1="0" y1="0" x2="0" y2="1"><stop offset="0" stop-color="#9a48e6"/><stop offset="0.45" stop-color="#e56a9a"/><stop offset="0.75" stop-color="#ee7a70"/><stop offset="1" stop-color="#f7a03a"/></linearGradient></defs><path d="M1688,75 H1691.5 Q1697.6,75.5 1697.6,81.5 L1697.2,88 Q1696.5,94 1693.5,97.5 Q1691,100 1687,100 H1667 Q1662.5,100 1661.5,96.5 L1661,93 H1677.5 Z" fill="url(#cpr)"/><path d="M1668,66 H1688 Q1693,66 1694.5,70 L1696,75 H1684.5 L1674,93.5 Q1671.5,99.6 1666,99.6 Q1658.6,99.6 1658.8,92 L1659.5,82 Q1660,75 1662.5,70.5 Q1664.5,66 1668,66 Z" fill="url(#cpl)"/><rect x="1738.6" y="61.8" width="41.4" height="41.5" rx="2.5" fill="#0d3a31"/><path d="M1743.3,86.9 H1755.8 V98.6 H1751.9 V90 H1743.3 Z M1753.4,76.4 H1765.5 V98.6 H1761.6 V79.9 H1753.4 Z M1763.2,66.2 H1776 V98.6 H1772.2 V69.7 H1763.2 Z" fill="#eaa98c"/><path d="M1828,70 V63 H1836 M1859,63 H1867 V70 M1828,96 V103 H1836 M1859,103 H1867 V96" fill="none" stroke="#5b5ea6" stroke-width="1.8"/><defs><linearGradient id="sb" x1="0" y1="1" x2="1" y2="0"><stop offset="0" stop-color="#f7902a"/><stop offset="0.5" stop-color="#e9508a"/><stop offset="1" stop-color="#a43cf0"/></linearGradient></defs><path d="M1835.5,101 Q1832,97 1842,91.5 Q1856,85 1863,86.5 Q1867.5,88 1861,93.5 Q1851,100.5 1840,102 Z" fill="url(#sb)"/><path d="M1842.5,90 Q1843,95 1846,96.5 L1850,96 Q1849,92 1850.5,90 Z" fill="#f07a22"/><rect x="1843.5" y="76" width="10" height="15" rx="4" fill="#ec5f1e"/><path d="M1834.5,78.5 L1843.5,81.5 L1846.5,90 L1837.5,87.5 Z" fill="#2b4cc4"/><circle cx="1849" cy="71" r="7" fill="#f2682a"/><path d="M1852,65 Q1856.5,69 1855,76 Q1853,78 1851.5,77 Z" fill="#b545e0"/><ellipse cx="1847" cy="72" rx="4.2" ry="3.6" fill="#5c1a4a"/><circle cx="1846" cy="71.8" r="1" fill="#fff"/></svg><svg class="a" style="left:1298px;top:80px;" width="9.5" height="6.5" viewBox="0 0 9.5 6.5"><path d="M1,1 L4.75,5.5 L8.5,1" fill="none" stroke="#3a3a3a" stroke-width="1.7920000000000003" stroke-linecap="round" stroke-linejoin="round"/></svg><svg class="a" style="left:1348px;top:77.5px;" width="9.5" height="6.5" viewBox="0 0 9.5 6.5"><path d="M1,1 L4.75,5.5 L8.5,1" fill="none" stroke="#3a3a3a" stroke-width="1.7920000000000003" stroke-linecap="round" stroke-linejoin="round"/></svg><svg class="a" style="left:1438px;top:80px;" width="9.5" height="6.5" viewBox="0 0 9.5 6.5"><path d="M1,1 L4.75,5.5 L8.5,1" fill="none" stroke="#3a3a3a" stroke-width="1.7920000000000003" stroke-linecap="round" stroke-linejoin="round"/></svg><div class="a" style="left:1505px;top:276px;width:373px;height:755px;background:#fbfbfb;border-radius:20px;box-shadow:0 10px 28px rgba(0,0,0,.10),0 2px 6px rgba(0,0,0,.05)"></div><div class="a" style="left:1531px;top:328px;width:321px;height:59px;border:1px solid #e4e4e4;border-radius:20px;background:#fbfbfb"></div><div class="a" style="left:1531px;top:399px;width:321px;height:59px;border:1px solid #e4e4e4;border-radius:20px;background:#fbfbfb"></div><svg class="a" style="left:1554px;top:348px;" width="19" height="18" viewBox="0 0 19 18"><rect x="1" y="1" width="17" height="5" fill="#4a4a4a"/><rect x="1" y="8" width="8" height="9" fill="#4a4a4a"/><rect x="10" y="8" width="8" height="9" fill="#4a4a4a"/></svg><div class="a" style="left:1589.14px;top:349px;font-size:19.2px;line-height:19.2px;color:#2e3038;letter-spacing:0.321px;-webkit-text-stroke:0.3px #2e3038">Suggest Layouts</div><svg class="a" style="left:0px;top:0px;" width="1920" height="1080" viewBox="0 0 1920 1080"><circle cx="1563.8" cy="427.5" r="9.7" fill="#4d4d4d"/><circle cx="1555.6" cy="435.6" r="3.4" fill="#fbfbfb"/><circle cx="1558" cy="424.4" r="1.25" fill="#fbfbfb"/><circle cx="1562.3" cy="422.1" r="1.25" fill="#fbfbfb"/><circle cx="1566.8" cy="424.4" r="1.25" fill="#fbfbfb"/></svg><div class="a" style="left:1588.48px;top:420px;font-size:19.0px;line-height:19.0px;color:#2e3038;letter-spacing:0.261px;-webkit-text-stroke:0.3px #2e3038">Enhance Design</div><svg class="a" style="left:0px;top:0px;" width="1920" height="1080" viewBox="0 0 1920 1080"><path d="M1547.8,432.6 L1547.8,448.8 L1551.6,445.2 L1554.6,451.6 L1557.2,450.4 L1554.4,444.2 L1559.6,444.2 Z" fill="#0d111c" stroke="#ffffff" stroke-width="1" stroke-linejoin="round" style="filter:drop-shadow(0 1px 1.5px rgba(0,0,0,.25))"/></svg><div class="a" style="left:1530.58px;top:484px;font-size:18.3px;line-height:18.3px;color:#2e3038;letter-spacing:-0.020px;-webkit-text-stroke:0.3px #2e3038">Style</div><div class="a" style="left:1532px;top:512px;width:320px;height:56px;background:#eceef0;border-radius:14px"></div><div class="a" style="left:1641px;top:520.5px;width:101px;height:40.0px;background:#f7953f;border-radius:12px"></div><div class="a" style="left:1569.53px;top:533px;font-size:17.2px;line-height:17.2px;color:#2e3038;letter-spacing:0.126px;-webkit-text-stroke:0.3px #2e3038">Strict</div><div class="a" style="left:1656.25px;top:534px;font-size:16.9px;line-height:16.9px;color:#ffffff;letter-spacing:-0.017px;-webkit-text-stroke:0.3px #ffffff">Balanced</div><div class="a" style="left:1775.64px;top:533px;font-size:17.0px;line-height:17.0px;color:#2e3038;letter-spacing:0.088px;-webkit-text-stroke:0.3px #2e3038">Rich</div><div class="a" style="left:1529.75px;top:586px;font-size:18.3px;line-height:18.3px;color:#2e3038;letter-spacing:0.038px;-webkit-text-stroke:0.3px #2e3038">Icons</div><div class="a" style="left:1532px;top:614.5px;width:320px;height:55.0px;background:#eceef0;border-radius:14px"></div><div class="a" style="left:1641px;top:623.0px;width:101px;height:39.0px;background:#f7953f;border-radius:12px"></div><div class="a" style="left:1557.59px;top:635px;font-size:17.6px;line-height:17.6px;color:#2e3038;letter-spacing:0.420px;-webkit-text-stroke:0.3px #2e3038">Minimal</div><div class="a" style="left:1655.66px;top:636px;font-size:16.8px;line-height:16.8px;color:#ffffff;letter-spacing:-0.017px;-webkit-text-stroke:0.3px #ffffff">Balanced</div><div class="a" style="left:1755.66px;top:636px;font-size:16.8px;line-height:16.8px;color:#2e3038;letter-spacing:-0.041px;-webkit-text-stroke:0.3px #2e3038">Extensive</div><div class="a" style="left:1530.59px;top:687px;font-size:18.1px;line-height:18.1px;color:#2e3038;letter-spacing:-0.056px;-webkit-text-stroke:0.3px #2e3038">Shapes And Lines</div><div class="a" style="left:1532px;top:716.5px;width:320px;height:55.0px;background:#eceef0;border-radius:14px"></div><div class="a" style="left:1641px;top:725.0px;width:101px;height:39.0px;background:#f7953f;border-radius:12px"></div><div class="a" style="left:1557.59px;top:737px;font-size:17.6px;line-height:17.6px;color:#2e3038;letter-spacing:0.420px;-webkit-text-stroke:0.3px #2e3038">Minimal</div><div class="a" style="left:1655.66px;top:738px;font-size:16.8px;line-height:16.8px;color:#ffffff;letter-spacing:-0.017px;-webkit-text-stroke:0.3px #ffffff">Balanced</div><div class="a" style="left:1755.66px;top:738px;font-size:16.8px;line-height:16.8px;color:#2e3038;letter-spacing:-0.041px;-webkit-text-stroke:0.3px #2e3038">Extensive</div><div class="a" style="left:1531.40px;top:797px;font-size:18.7px;line-height:18.7px;color:#2e3038;letter-spacing:0.221px;-webkit-text-stroke:0.3px #2e3038">Additional Thoughts:</div><div class="a" style="left:1531px;top:826px;width:321px;height:110px;background:#f4f5f7;border:1px solid #e2e4e8;border-radius:14px"></div><div class="a" style="left:1546.56px;top:845px;font-size:18.0px;line-height:18.0px;color:#9a9a9a;letter-spacing:0.036px">Do you have any specific</div><div class="a" style="left:1546.82px;top:870px;font-size:18.2px;line-height:18.2px;color:#9a9a9a;letter-spacing:0.092px">instructions for Oria?</div><div class="a" style="left:1531px;top:957px;width:321px;height:54px;background:#fbdcbc;border-radius:24px;box-shadow:0 4px 10px rgba(0,0,0,.06)"></div><div class="a" style="left:1627.15px;top:976px;font-size:17.0px;line-height:17.0px;color:#ffffff;letter-spacing:0.031px;-webkit-text-stroke:0.3px #fff">Generate Design</div></body></html>
